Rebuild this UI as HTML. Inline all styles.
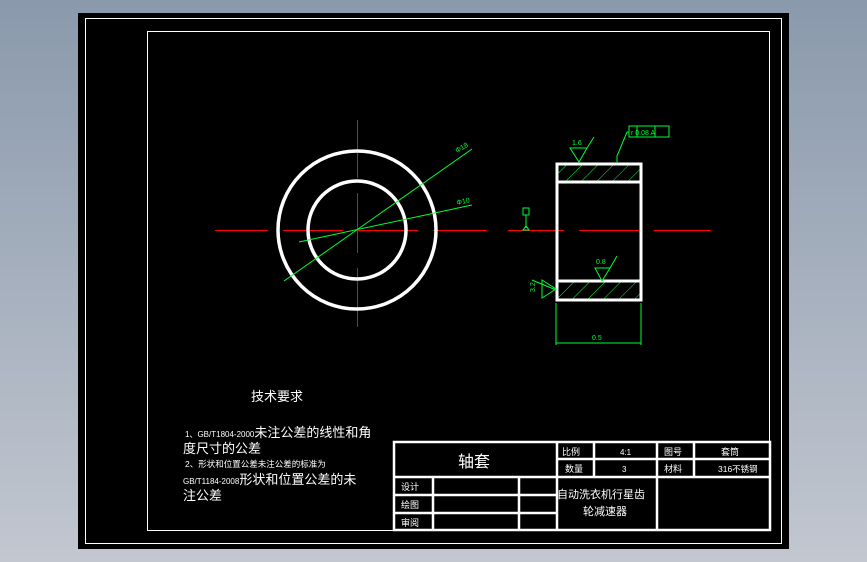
<!DOCTYPE html>
<html><head><meta charset="utf-8"><style>
html,body{margin:0;padding:0;width:867px;height:562px;overflow:hidden;background:linear-gradient(#8a99ac,#c2c7d0);}
svg{position:absolute;left:0;top:0}
text{font-family:"Liberation Sans","Noto Sans CJK SC",sans-serif;fill:#fff}
.g{fill:#00ff30;font-size:7px}
</style></head><body>
<svg width="867" height="562" viewBox="0 0 867 562">
<defs><pattern id="h" width="11" height="11" patternUnits="userSpaceOnUse" patternTransform="rotate(45)"><line x1="0" y1="0" x2="0" y2="11" stroke="#00ff30" stroke-width="1"/></pattern></defs>
<rect x="78" y="13" width="711" height="536" fill="#000"/>
<rect x="85.5" y="18.5" width="696" height="525" fill="none" stroke="#fff" stroke-width="1"/>
<rect x="147.5" y="31.5" width="622" height="499" fill="none" stroke="#fff" stroke-width="1"/>
<g stroke="#ff0000" stroke-width="1">
<line x1="215" y1="230.5" x2="268" y2="230.5"/><line x1="283" y1="230.5" x2="343" y2="230.5"/><line x1="357" y1="230.5" x2="418" y2="230.5"/><line x1="433" y1="230.5" x2="487" y2="230.5"/><line x1="508" y1="230.5" x2="564" y2="230.5"/><line x1="579" y1="230.5" x2="639" y2="230.5"/><line x1="654" y1="230.5" x2="711" y2="230.5"/>
<line x1="357.5" y1="120" x2="357.5" y2="178"/><line x1="357.5" y1="193" x2="357.5" y2="253"/><line x1="357.5" y1="268" x2="357.5" y2="327"/>
</g>
<circle cx="357" cy="230" r="79" fill="none" stroke="#fff" stroke-width="3.5"/>
<circle cx="357" cy="230" r="49" fill="none" stroke="#fff" stroke-width="3.5"/>
<g stroke="#00ff30" stroke-width="1" fill="none">
<line x1="284" y1="281" x2="472" y2="149"/>
<line x1="299" y1="242" x2="472" y2="205"/>
</g>
<text class="g" x="457" y="153" transform="rotate(-30 457 153)">Φ18</text>
<text class="g" x="457" y="205" transform="rotate(-12 457 205)">Φ10</text>
<rect x="557" y="164" width="84" height="18" fill="url(#h)"/>
<rect x="557" y="281" width="84" height="19" fill="url(#h)"/>
<g stroke="#fff" stroke-width="3" fill="none">
<rect x="557" y="164" width="84" height="136"/>
<line x1="557" y1="182" x2="641" y2="182"/><line x1="557" y1="281" x2="641" y2="281"/>
</g>
<g stroke="#00ff30" stroke-width="1" fill="none">
<path d="M570 148 H587 L579 162 Z M587 148 L594 137"/>
<path d="M595 268 H610 L602 281 Z M610 268 L617 256"/>
<path d="M542 280 V298 L556 289 Z M532 280 L556 290"/>
<rect x="629" y="126" width="40" height="11"/><line x1="637" y1="126" x2="637" y2="137"/><line x1="655" y1="126" x2="655" y2="137"/>
<path d="M629 132 H627 L617 156 V163"/>
<path d="M556 303 V345 M641 303 V345 M556 343 H641"/>
<rect x="523" y="208" width="6" height="7"/><line x1="526" y1="215" x2="526" y2="228"/><path d="M523 230 L526 226 L529 230 Z"/>
</g>
<text class="g" x="572" y="145">1.6</text>
<text class="g" x="596" y="264">0.8</text>
<text class="g" x="592" y="340">0.5</text>
<text class="g" x="631" y="135">r 0.08 A</text>
<text class="g" x="535" y="292" transform="rotate(-90 535 292)">3.2</text>
<text x="251" y="401" font-size="13">技术要求</text>
<text x="185" y="437" font-size="13"><tspan font-size="8">1、GB/T1804-2000</tspan>未注公差的线性和角</text>
<text x="183" y="453" font-size="13">度尺寸的公差</text>
<text x="185" y="467" font-size="8.5">2、形状和位置公差未注公差的标准为</text>
<text x="183" y="484" font-size="13"><tspan font-size="8">GB/T1184-2008</tspan>形状和位置公差的未</text>
<text x="183" y="500" font-size="13">注公差</text>
<g stroke="#fff" stroke-width="2.5" fill="none">
<rect x="394" y="442" width="376" height="88"/>
<line x1="394" y1="477" x2="770" y2="477"/>
<line x1="557" y1="459" x2="770" y2="459"/>
<line x1="394" y1="495" x2="557" y2="495"/><line x1="394" y1="513" x2="557" y2="513"/>
<line x1="433" y1="477" x2="433" y2="530"/><line x1="519" y1="477" x2="519" y2="530"/>
<line x1="557" y1="442" x2="557" y2="530"/><line x1="594" y1="442" x2="594" y2="477"/>
<line x1="657" y1="442" x2="657" y2="530"/><line x1="694" y1="442" x2="694" y2="477"/>
</g>
<text x="458" y="467" font-size="16">轴套</text>
<text x="562" y="455" font-size="9">比例</text><text x="620" y="455" font-size="8">4:1</text>
<text x="664" y="455" font-size="9">图号</text><text x="721" y="455" font-size="9">套筒</text>
<text x="565" y="472" font-size="9">数量</text><text x="622" y="472" font-size="8">3</text>
<text x="664" y="472" font-size="9">材料</text><text x="718" y="472" font-size="8.5">316不锈钢</text>
<text x="401" y="490" font-size="9">设计</text><text x="401" y="508" font-size="9">绘图</text><text x="401" y="526" font-size="9">审阅</text>
<text x="557" y="498" font-size="11">自动洗衣机行星齿</text>
<text x="583" y="515" font-size="11">轮减速器</text>
</svg>
</body></html>
